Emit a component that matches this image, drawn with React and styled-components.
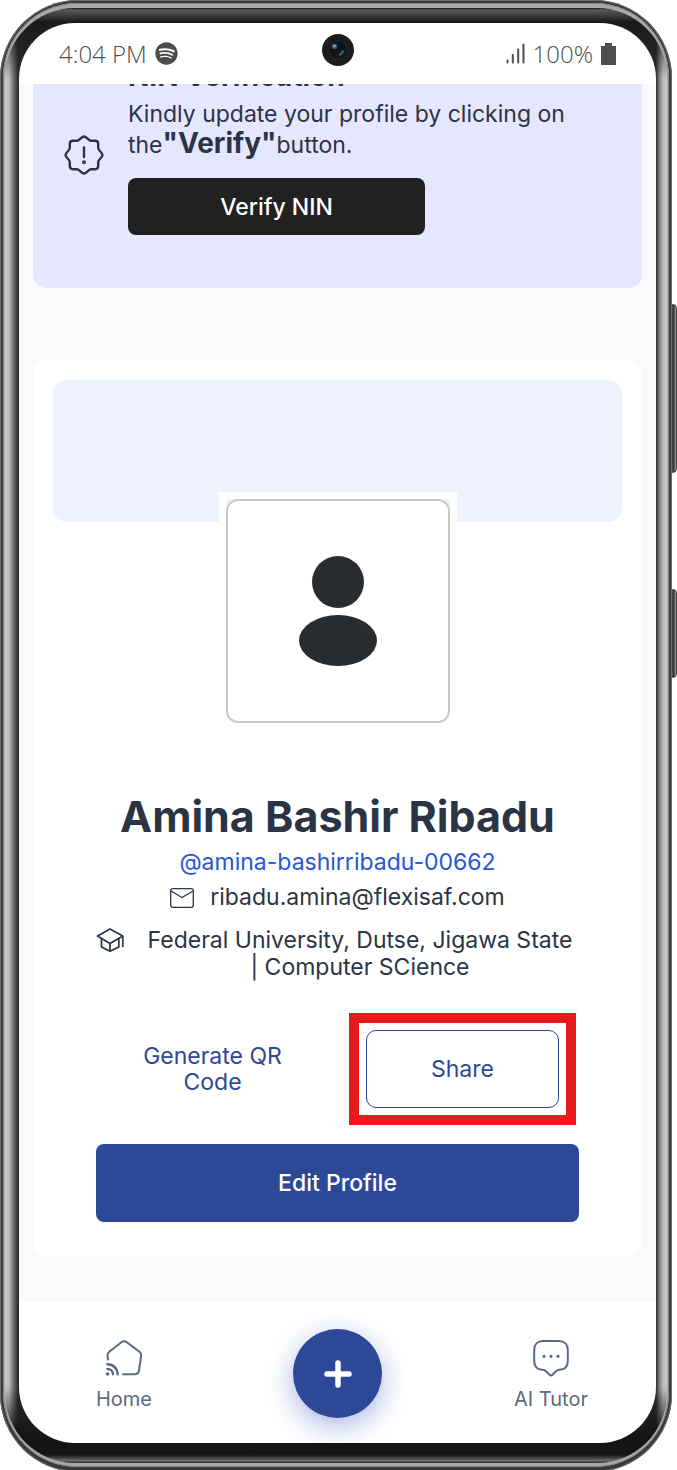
import React from "react";
import styled, { createGlobalStyle } from "styled-components";
import { FaSpotify } from "react-icons/fa";

const GlobalStyle = createGlobalStyle`
  * {
    box-sizing: border-box;
  }

  body {
    margin: 0;
    background: #fff;
    color: #2b3445;
    font-family: Inter, "Liberation Sans", sans-serif;
  }

  h1, h2, p {
    margin: 0;
  }

  button {
    font-family: inherit;
    cursor: pointer;
  }
`;

const Phone = styled.div`
  position: relative;
  margin: 0 5px 0 0;
  padding: 3px 3px 5px;
  border-radius: 78px;
  background: #3a3a3a;
  box-shadow: inset 0 0 0 1px #6d6d6d;
`;

const SideKey = styled.span`
  position: absolute;
  left: 100%;
  top: ${(props) => props.$top}px;
  width: 5px;
  height: ${(props) => props.$height}px;
  border: 1px solid #4a4a4a;
  border-radius: 0 4px 4px 0;
  background: linear-gradient(to right, #333 0 1px, #8a8a8a 2px);
`;

const Rim = styled.div`
  padding: 5px 2px 4px;
  border-radius: 74px;
  background: #a9a9a9;
  box-shadow: inset 0 0 0 1px #8a8a8a;
`;

const Bezel = styled.div`
  padding: 15px 11px 20px 14px;
  border-radius: 70px;
  background:
    linear-gradient(
      to bottom,
      #151515 0,
      #5a5a5a 2px,
      #1a1a1a 14px,
      rgba(26, 26, 26, 0.7) 30px,
      transparent 70px,
      transparent calc(100% - 76px),
      rgba(20, 20, 20, 0.8) calc(100% - 36px),
      #141414 calc(100% - 20px),
      #161616 calc(100% - 8px),
      #707070 calc(100% - 2px),
      #1c1c1c 100%
    ),
    linear-gradient(
      to right,
      #c6c6c6 0,
      #bdbdbd 4px,
      #777 8px,
      #2c2c2c 13px,
      #2c2c2c calc(100% - 11px),
      #777 calc(100% - 8px),
      #bdbdbd calc(100% - 4px),
      #c6c6c6 100%
    );
`;

const Screen = styled.main`
  overflow: hidden;
  border-radius: 56px;
  background: #fff;
`;

const StatusBar = styled.header`
  position: relative;
  display: flex;
  align-items: center;
  justify-content: space-between;
  height: 61px;
  padding: 0 40px;
  color: #4d4d4d;
  font-family: "Open Sans", "Noto Sans", sans-serif;
  font-size: 24px;
  font-weight: 300;
`;

const StatusGroup = styled.div`
  display: flex;
  align-items: center;
  gap: 8px;
`;

const Camera = styled.svg`
  position: absolute;
  top: 10px;
  left: 50%;
  transform: translateX(-50%);
`;

const Feed = styled.div`
  overflow: hidden;
  padding: 0 14px 45px;
  background: #f9fafc;
`;

const Banner = styled.section`
  display: flex;
  align-items: flex-start;
  gap: 24px;
  margin-top: -44px;
  padding: 20px 31px 53px;
  border-radius: 14px;
  background: #e6e6ff;
`;

const BannerIcon = styled.svg`
  flex: none;
  margin-top: 75px;
`;

const BannerBody = styled.div`
  flex: 1;
`;

const BannerTitle = styled.h2`
  font-size: 28px;
  line-height: 32px;
  font-weight: 700;
`;

const BannerText = styled.p`
  margin: 7px 0 17px;
  font-size: 23px;
  line-height: 31px;

  strong {
    font-size: 28px;
    line-height: 24px;
  }
`;

const VerifyButton = styled.button`
  width: 297px;
  max-width: 100%;
  height: 57px;
  border: none;
  border-radius: 8px;
  background: #212121;
  color: #fff;
  font-size: 23px;
  font-weight: 500;
`;

const Card = styled.section`
  margin-top: 71px;
  padding: 21px 20px 35px;
  border-radius: 14px;
  background: #fff;
`;

const Cover = styled.div`
  height: 142px;
  border-radius: 14px;
  background: #eef3ff;
`;

const AvatarFrame = styled.div`
  width: 238px;
  height: 238px;
  margin: -30px auto 0;
  border: 7px solid #fff;
`;

const Avatar = styled.div`
  display: flex;
  align-items: center;
  justify-content: center;
  height: 100%;
  border: 2px solid #c9c8cd;
  border-radius: 12px;
  background: #fff;
`;

const Details = styled.div`
  display: flex;
  flex-direction: column;
  align-items: center;
  padding: 59px 43px 0;
  text-align: center;
  font-size: 23px;
  line-height: 27px;
`;

const Name = styled.h1`
  font-size: 43px;
  line-height: 54px;
  font-weight: 700;
  white-space: nowrap;
`;

const Handle = styled.a`
  margin-top: 6px;
  color: #2557d6;
  text-decoration: none;
`;

const Email = styled.p`
  display: flex;
  align-items: center;
  gap: 16px;
  margin-top: 8px;
`;

const School = styled.p`
  display: flex;
  align-items: flex-start;
  gap: 16px;
  width: 100%;
  margin-top: 16px;

  svg {
    flex: none;
  }

  span {
    flex: 1;
  }
`;

const Actions = styled.div`
  display: grid;
  grid-template-columns: 1fr 1fr;
  gap: 57px;
  width: 100%;
  margin-top: 49px;
  padding: 0 20px;
`;

const ActionButton = styled.button`
  position: relative;
  height: 78px;
  border: ${(props) => (props.$outlined ? "1px solid #2c4896" : "none")};
  border-radius: 10px;
  background: #fff;
  color: #2c4896;
  font-size: 23px;
  line-height: 26px;
`;

const Highlight = styled.span`
  position: absolute;
  inset: -18px;
  border: 10px solid #e71b1b;
  pointer-events: none;
`;

const EditButton = styled.button`
  width: 100%;
  height: 78px;
  margin-top: 36px;
  border: none;
  border-radius: 8px;
  background: #2c4896;
  color: #fff;
  font-size: 23px;
  font-weight: 500;
`;

const Nav = styled.nav`
  display: flex;
  align-items: flex-start;
  justify-content: space-between;
  height: 141px;
  padding: 27px 60px 0;
`;

const NavItem = styled.a`
  display: flex;
  flex-direction: column;
  align-items: center;
  gap: 10px;
  width: 90px;
  padding-top: 10px;
  color: #5a6a80;
  font-size: 20px;
  line-height: 24px;
  text-decoration: none;
`;

const AddButton = styled.button`
  display: flex;
  align-items: center;
  justify-content: center;
  width: 89px;
  height: 89px;
  border: none;
  border-radius: 50%;
  background: #2c4896;
  box-shadow: 0 8px 28px rgba(60, 90, 190, 0.45);
`;

const App = () => {
  return (
    <>
      <GlobalStyle />
      <Phone>
        <SideKey $top={304} $height={169} />
        <SideKey $top={589} $height={89} />
        <Rim>
          <Bezel>
            <Screen>
              <StatusBar>
                <StatusGroup>
                  4:04 PM
                  <FaSpotify size={23} />
                </StatusGroup>
                <Camera width="34" height="34" viewBox="0 0 34 34">
                  <circle cx="17" cy="17" r="16" fill="#1c1c1c" />
                  <circle cx="17" cy="17" r="9" fill="#121416" stroke="#222527" />
                  <circle cx="13.500" cy="13.500" r="2.800" fill="#35596b" />
                  <circle cx="13.500" cy="13" r="1.300" fill="#7fb4c8" />
                  <path d="M19 21.500L22 18.500" stroke="#2c5f62" strokeWidth="2.600" strokeLinecap="round" fill="none" />
                </Camera>
                <StatusGroup>
                  <svg width="19" height="21" viewBox="0 0 19 21" stroke="currentColor" strokeWidth="2" strokeLinecap="round">
                    <path d="M1.500 17.500v2M6.800 12v7.500M12.200 6.500v13M17.500 1.500v18" />
                  </svg>
                  100%
                  <svg width="15" height="22" viewBox="0 0 15 22" fill="currentColor">
                    <path d="M4 0h7v3h4v19H0V3h4z" />
                  </svg>
                </StatusGroup>
              </StatusBar>

              <Feed>
                <Banner>
                  <BannerIcon width="40" height="40" viewBox="0 0 40 40" fill="none" stroke="#2b3445" strokeWidth="2.4" strokeLinejoin="round" strokeLinecap="round">
                    <path d="M20 1.500C22.500 1.500 24 5.500 27 5.800H31C33 5.800 34.200 7 34.200 9V13C34.500 16 38.500 17.500 38.500 20C38.500 22.500 34.500 24 34.200 27V31C34.200 33 33 34.200 31 34.200H27C24 34.500 22.500 38.500 20 38.500C17.500 38.500 16 34.500 13 34.200H9C7 34.200 5.800 33 5.800 31V27C5.500 24 1.500 22.500 1.500 20C1.500 17.500 5.500 16 5.800 13V9C5.800 7 7 5.800 9 5.800H13C16 5.500 17.500 1.500 20 1.500Z" />
                    <path d="M20 12.500v9.500" />
                    <circle cx="20" cy="27.300" r="0.8" />
                  </BannerIcon>
                  <BannerBody>
                    <BannerTitle>NIN Verification</BannerTitle>
                    <BannerText>
                      Kindly update your profile by clicking on the
                      <strong>"Verify"</strong>button.
                    </BannerText>
                    <VerifyButton type="button">Verify NIN</VerifyButton>
                  </BannerBody>
                </Banner>

                <Card>
                  <Cover />
                  <AvatarFrame>
                    <Avatar>
                      <svg width="78" height="110" viewBox="0 0 78 110" fill="#292d32">
                        <circle cx="39" cy="26" r="26" />
                        <ellipse cx="39" cy="84.500" rx="39" ry="25.500" />
                      </svg>
                    </Avatar>
                  </AvatarFrame>
                  <Details>
                    <Name>Amina Bashir Ribadu</Name>
                    <Handle href="#profile">@amina-bashirribadu-00662</Handle>
                    <Email>
                      <svg width="24" height="20" viewBox="0 0 24 20" fill="none" stroke="#2b3445" strokeWidth="1.3">
                        <rect x="0.7" y="0.7" width="22.600" height="18.600" rx="2" />
                        <path d="M1 3L12 9.500L23 3" />
                      </svg>
                      ribadu.amina@flexisaf.com
                    </Email>
                    <School>
                      <svg width="29" height="26" viewBox="0 0 29 26" fill="none" stroke="#2b3445" strokeWidth="1.700" strokeLinejoin="round">
                        <path d="M14 2L1.500 9L14 16.500L26.800 9Z" />
                        <path d="M5.500 11.500V20L14 24.300L22.800 20V11.500M14 16.500V24.300M26.800 9V20" />
                      </svg>
                      <span>Federal University, Dutse, Jigawa State | Computer SCience</span>
                    </School>
                    <Actions>
                      <ActionButton type="button">Generate QR Code</ActionButton>
                      <ActionButton type="button" $outlined>
                        Share
                        <Highlight />
                      </ActionButton>
                    </Actions>
                    <EditButton type="button">Edit Profile</EditButton>
                  </Details>
                </Card>
              </Feed>

              <Nav>
                <NavItem href="#home">
                  <svg width="38" height="38" viewBox="0 0 38 38" fill="none" stroke="currentColor" strokeWidth="2" strokeLinecap="round" strokeLinejoin="round">
                    <path d="M3 20.500L2.500 17C2.300 15 2.700 14 4.200 12.800L16.500 3.200C18.300 1.800 20 1.800 21.800 3.200L34.500 12.800C36 14 36.400 15 36.100 17L34 31.500C33.600 34.200 32.200 35.300 29.500 35.300H18" />
                    <path d="M2.500 25.200C8.300 25.200 12.600 29.500 12.600 35.300M2.500 30C5.800 30 8 32.200 8 35.300" strokeWidth="2.400" />
                    <circle cx="2.600" cy="35" r="0.8" />
                  </svg>
                  Home
                </NavItem>
                <AddButton type="button" aria-label="Add">
                  <svg width="28" height="28" viewBox="0 0 28 28" stroke="#fff" strokeWidth="5.500" strokeLinecap="round">
                    <path d="M14 3v22M3 14h22" />
                  </svg>
                </AddButton>
                <NavItem href="#tutor">
                  <svg width="38" height="38" viewBox="0 0 38 38" fill="none" stroke="currentColor" strokeWidth="2" strokeLinecap="round" strokeLinejoin="round">
                    <path d="M11 2H27C32.500 2 35.800 5.300 35.800 10.800V22C35.800 27.500 33 30.500 27.500 30.800C25 31 24.500 31.200 23.200 33L20.800 35.500C19.700 36.600 18.300 36.600 17.200 35.500L14.800 33C13.500 31.200 13 31 10.500 30.800C5 30.500 2.200 27.500 2.200 22V10.800C2.200 5.300 5.500 2 11 2Z" />
                    <path d="M12 17.300h.01M19 17.300h.01M26 17.300h.01" strokeWidth="3.200" />
                  </svg>
                  AI Tutor
                </NavItem>
              </Nav>
            </Screen>
          </Bezel>
        </Rim>
      </Phone>
    </>
  );
};

export default App;
